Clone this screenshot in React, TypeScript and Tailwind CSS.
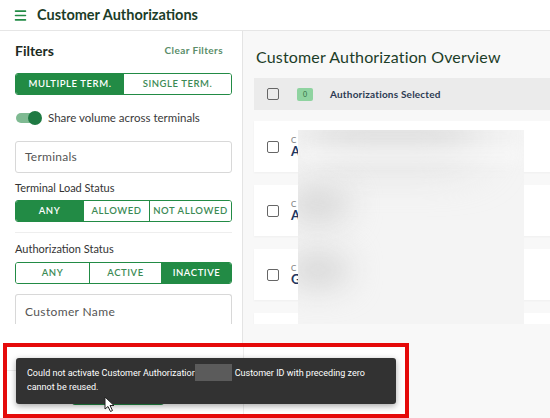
import { Menu } from "lucide-react";

const green = "bg-[#228b45]";

function Segmented({ items, active, widths }: { items: string[]; active: number; widths: string[] }) {
  return (
    <div className="flex h-[22px] rounded-[3px] border border-[#228b45] overflow-hidden">
      {items.map((it, i) => (
        <div
          key={it}
          className={`${widths[i]} flex items-center justify-center whitespace-nowrap text-[9.5px] font-semibold tracking-[0.06em] ${
            i > 0 ? "border-l border-[#228b45]" : ""
          } ${i === active ? `${green} text-white` : "bg-white text-[#3c8a55]"}`}
        >
          {it}
        </div>
      ))}
    </div>
  );
}

function Row({ letter }: { letter?: string }) {
  return (
    <div className="h-[51px] bg-white flex items-center pl-[13px] shadow-[0_1px_2px_rgba(0,0,0,0.04)]">
      <div className="w-[12px] h-[12px] border-[1.5px] border-[#666] rounded-[2px]" />
      {letter && (
        <div className="ml-[12px] leading-none">
          <div className="text-[8px] text-[#777]">C</div>
          <div className="text-[13px] font-bold text-[#22355e] mt-[1px]">{letter}</div>
        </div>
      )}
    </div>
  );
}

export default function App() {
  return (
    <div className="relative w-[550px] h-[418px] overflow-hidden bg-[#f8f8f8] font-['Lato',sans-serif]">
      <div className="h-[31px] bg-white border-b border-[#e6e6e6] flex items-center pl-[13px]">
        <Menu size={15} strokeWidth={2.5} className="text-[#228b45]" />
        <span className="ml-[9px] text-[14.5px] font-bold text-[#1c3d28]">Customer Authorizations</span>
      </div>
      <div className="flex h-[387px]">
        <aside className="w-[243px] shrink-0 bg-white border-r border-[#e4e4e4] flex flex-col">
          <div className="h-[293px] overflow-hidden pl-[15px] pr-[10px] pt-[10px]">
            <div className="flex items-center justify-between h-[18px]">
              <span className="text-[14px] font-bold text-[#1c2b22]">Filters</span>
              <span className="text-[10px] font-bold text-[#5a8d69] tracking-[0.04em] mr-[9px]">Clear Filters</span>
            </div>
            <div className="mt-[14px] flex h-[22px] rounded-[3px] border border-[#228b45] overflow-hidden">
              <div className={`w-[108px] ${green} text-white flex items-center justify-center text-[9.5px] font-semibold tracking-[0.06em]`}>
                MULTIPLE TERM.
              </div>
              <div className="flex-1 bg-white text-[#3c8a55] flex items-center justify-center text-[9.5px] font-semibold tracking-[0.06em]">
                SINGLE TERM.
              </div>
            </div>
            <div className="mt-[15px] flex items-center h-[16px]">
              <div className="relative w-[24px] h-[10px] rounded-full bg-[#7fba92] ml-[1px]">
                <div className="absolute right-[-2px] top-[-2px] w-[14px] h-[14px] rounded-full bg-[#1f7a43]" />
              </div>
              <span className="ml-[8px] text-[11.5px] text-[#3a3a3a]">Share volume across terminals</span>
            </div>
            <div className="mt-[15px] h-[32px] rounded-[3px] border border-[#d8d8d8] flex items-center pl-[9px] text-[12px] text-[#555] tracking-[0.02em]">
              Terminals
            </div>
            <div className="mt-[8px] text-[11px] text-[#333] h-[14px] leading-[14px]">Terminal Load Status</div>
            <div className="mt-[5px]">
              <Segmented items={["ANY", "ALLOWED", "NOT ALLOWED"]} active={0} widths={["w-[67px]", "w-[66px]", "flex-1"]} />
            </div>
            <div className="mt-[10px] border-t border-[#eeeeee]" />
            <div className="mt-[9px] text-[11px] text-[#333] h-[14px] leading-[14px]">Authorization Status</div>
            <div className="mt-[6px]">
              <Segmented items={["ANY", "ACTIVE", "INACTIVE"]} active={2} widths={["w-[73px]", "w-[72px]", "flex-1"]} />
            </div>
            <div className="mt-[10px] h-[34px] rounded-t-[3px] border border-b-0 border-[#d8d8d8] flex items-center pl-[9px] text-[12px] text-[#555] tracking-[0.03em]">
              Customer Name
            </div>
          </div>
          <div className="flex-1 bg-white" />
        </aside>
        <main className="flex-1 overflow-hidden">
          <div className="h-[293px] overflow-hidden relative">
            <div className="pl-[13px] pt-[15px] text-[16px] text-[#1c3d28] h-[47px] leading-[22px] whitespace-nowrap tracking-[0.01em]">
              Customer Authorization Overview
            </div>
            <div className="ml-[11px] w-[400px]">
              <div className="h-[32px] bg-[#ebebeb] flex items-center pl-[13px]">
                <div className="w-[12px] h-[12px] border-[1.5px] border-[#666] rounded-[2px]" />
                <div className="ml-[18px] w-[16px] h-[13px] rounded-[2px] bg-[#8fd3a0] text-[7px] text-[#2c6b3e] flex items-center justify-center">
                  0
                </div>
                <span className="ml-[17px] text-[10px] font-bold text-[#2c3a52] tracking-[0.02em]">Authorizations Selected</span>
              </div>
              <div className="mt-[11px] flex flex-col gap-[13px]">
                <Row letter="A" />
                <Row letter="A" />
                <Row letter="G" />
                <Row />
              </div>
            </div>
            <div className="absolute left-[55px] top-[99px] w-[226px] h-[200px] bg-[#f4f4f4] overflow-hidden">
              <div className="absolute left-[10px] top-[-10px] w-[170px] h-[40px] rounded-full bg-[#d8d8d8] blur-xl" />
              <div className="absolute left-[-10px] top-[60px] w-[60px] h-[30px] rounded-full bg-[#d2d2d2] blur-lg" />
              <div className="absolute left-[-10px] top-[125px] w-[60px] h-[30px] rounded-full bg-[#d2d2d2] blur-lg" />
              <div className="absolute left-0 top-[20px] w-[226px] h-[10px] bg-[#fafafa] blur-sm" />
            </div>
          </div>
        </main>
      </div>

      {/* annotation + snackbar */}
      <div className="absolute left-[3px] top-[343px] w-[406px] h-[75px] border-[4px] border-[#e50a0a] bg-white">
        <div className="absolute left-[236px] top-0 bottom-0 w-[1px] bg-[#ececec]" />
        <div className="absolute left-0 top-[23px] w-[228px] h-[1px] bg-[#ededed]" />
        <div className="absolute left-[65px] top-[33px] w-[92px] h-[25px] rounded-[3px] bg-[#228b45]" />
        <div className="absolute left-[9px] top-[11px] w-[380px] h-[46px] rounded-[3px] bg-[#323232] shadow-[0_2px_6px_rgba(0,0,0,0.35)] pl-[11px] pr-[10px] pt-[9px] text-[9px] leading-[13px] text-white font-['Roboto',sans-serif]">
          <div className="whitespace-nowrap flex items-start">
            <span>Could not activate Customer Authorizatior</span>
            <span className="inline-block w-[37px] h-[17px] bg-[#5b5b5b] -mt-[3px]" />
            <span className="ml-[3px]">Customer ID with preceding zero</span>
          </div>
          <div>cannot be reused.</div>
        </div>
        <svg className="absolute left-[97px] top-[49px]" width="12" height="17" viewBox="0 0 12 17">
          <path d="M1 1 L1 13 L4 10.5 L6.5 15.5 L8.5 14.5 L6 9.5 L10 9.5 Z" fill="#fff" stroke="#222" strokeWidth="1" strokeLinejoin="round" />
        </svg>
      </div>
    </div>
  );
}
